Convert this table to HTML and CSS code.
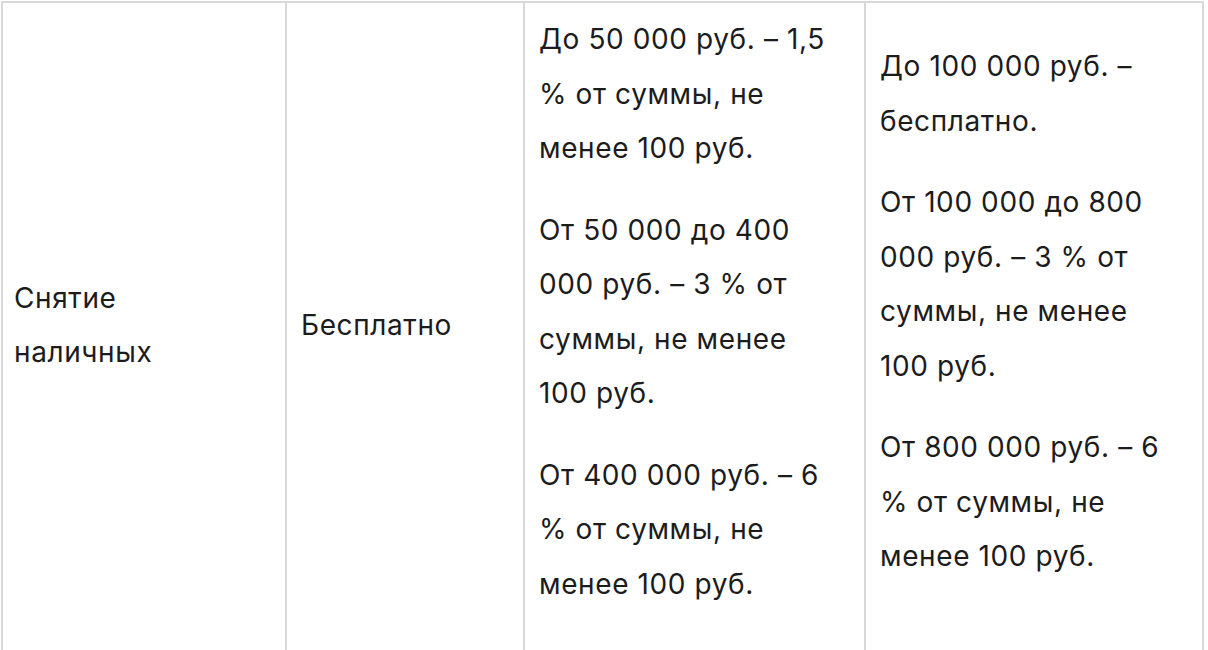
FILE: index.html
```html
<!DOCTYPE html>
<html lang="ru">
<head>
<meta charset="utf-8">
<title>Тарифы</title>
<link rel="stylesheet" href="styles.css">
</head>
<body>
<table class="tariffs">
  <colgroup>
    <col class="c1">
    <col class="c2">
    <col class="c3">
    <col class="c4">
  </colgroup>
  <tbody>
    <tr>
      <td class="cell first">Снятие наличных</td>
      <td class="cell">Бесплатно</td>
      <td class="cell">
        <p>До 50 000 руб. – 1,5 % от суммы, не менее 100 руб.</p>
        <p>От 50 000 до 400 000 руб. – 3 % от суммы, не менее 100 руб.</p>
        <p>От 400 000 руб. – 6 % от суммы, не менее 100 руб.</p>
      </td>
      <td class="cell last">
        <p>До 100 000 руб. – бесплатно.</p>
        <p>От 100 000 до 800 000 руб. – 3 % от суммы, не менее 100 руб.</p>
        <p>От 800 000 руб. – 6 % от суммы, не менее 100 руб.</p>
      </td>
    </tr>
  </tbody>
</table>
</body>
</html>
```
FILE: styles.css
```css
html, body {
  margin: 0;
  background: #ffffff;
}
body {
  padding: 1px;
  font-family: Inter, "Noto Sans", "Liberation Sans", sans-serif;
  color: #1c1c1c;
}
.tariffs {
  border-collapse: separate;
  border-spacing: 0;
  table-layout: fixed;
  width: 1203px;
  font-size: 28px;
  letter-spacing: 0.6px;
  line-height: 54.5px;
}
.c1 { width: 284px; }
.c2 { width: 238px; }
.c3 { width: 341px; }
.c4 { width: 340px; }
.cell {
  border-top: 2px solid #d9d9d9;
  border-left: 2px solid #d9d9d9;
  border-bottom: 2px solid #d9d9d9;
  padding: 9px 30px 14px 14px;
  vertical-align: middle;
  text-align: left;
}
.cell.first {
  padding-left: 11px;
}
.cell.last {
  border-right: 2px solid #d9d9d9;
}
.cell p {
  margin: 0 0 27px;
}
```
